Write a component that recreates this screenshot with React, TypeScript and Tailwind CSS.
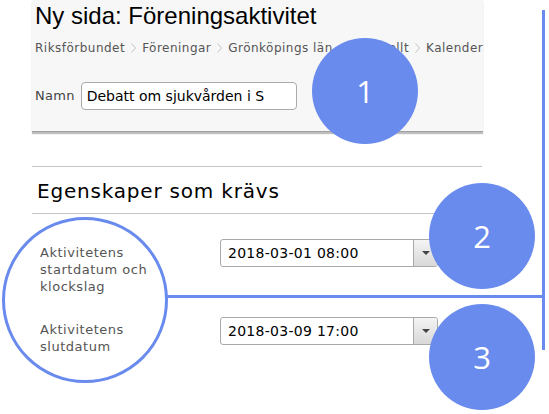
import React from "react";

const verd = { fontFamily: '"DejaVu Sans", Verdana, sans-serif' };

function Crumb({ children, last }: { children: React.ReactNode; last?: boolean }) {
  return (
    <span className="flex items-center">
      <span>{children}</span>
      {!last && (
        <svg className="mx-[6px]" width="5" height="10" viewBox="0 0 5 10">
          <path d="M0.5 0.5 L4.5 5 L0.5 9.5" fill="none" stroke="#c4c4c4" strokeWidth="1" />
        </svg>
      )}
    </span>
  );
}

function DateSelect({ value }: { value: string }) {
  return (
    <div className="flex h-[28px] w-[218px] items-stretch rounded-[3px] border border-[#a9a9a9] bg-white">
      <div className="flex flex-1 items-center pl-[7px] text-[14px] tracking-[0.02em] text-black" style={verd}>
        {value}
      </div>
      <div className="flex w-[24px] items-center justify-center rounded-r-[3px] border-l border-[#a9a9a9] bg-gradient-to-b from-[#f4f4f4] to-[#d8d8d8]">
        <div className="h-0 w-0 border-x-[4px] border-t-[4px] border-x-transparent border-t-[#444]" />
      </div>
    </div>
  );
}

function Badge({ n, className }: { n: string; className: string }) {
  return (
    <div
      className={`absolute flex h-[106px] w-[106px] items-center justify-center rounded-full bg-[#6a8bee] text-[31px] text-white ${className}`}
      style={{ fontFamily: '"Open Sans", sans-serif' }}
    >
      {n}
    </div>
  );
}

export default function App() {
  return (
    <div className="relative h-[414px] w-[549px] overflow-hidden bg-white">
      {/* top panel */}
      <div className="ml-[32px] h-[132px] w-[451px] border-b border-[#a0a0a0] bg-[#f7f7f7] pl-[3px] shadow-[0_2px_1px_0px_rgba(0,0,0,0.25)]">
        <div className="pt-[1px] text-[24px] leading-[30px] text-black" style={{ fontFamily: '"Liberation Sans", Arial, sans-serif' }}>
          Ny sida: Föreningsaktivitet
        </div>
        <div className="mt-[8px] flex items-center whitespace-nowrap text-[12px] tracking-[0.04em] text-[#555]" style={verd}>
          <Crumb>Riksförbundet</Crumb>
          <Crumb>Föreningar</Crumb>
          <Crumb>Grönköpings län - Nationellt</Crumb>
          <Crumb last>Kalender</Crumb>
        </div>
        <div className="mt-[25px] flex items-center" style={verd}>
          <span className="text-[13px] tracking-[0.02em] text-[#444]">Namn</span>
          <div className="ml-[6px] flex h-[28px] w-[216px] items-center rounded-[4px] border border-[#aaa] bg-white pl-[5px] text-[14px] text-black">
            Debatt om sjukvården i S
          </div>
        </div>
      </div>

      {/* lower section */}
      <div className="ml-[32px] mt-[34px] w-[450px]">
        <div className="border-t border-[#c4c4c4]" />
        <div className="h-[46px] pl-[5px] pt-[11px] text-[20px] leading-[26px] tracking-[0.04em] text-black" style={verd}>
          Egenskaper som krävs
        </div>
        <div className="border-t border-[#c4c4c4]" />
        <div className="mt-[25px] flex pl-[8px]" style={verd}>
          <div className="w-[180px] pt-[5px] text-[13px] leading-[17px] tracking-[0.04em] text-[#555]">
            Aktivitetens<br />startdatum och<br />klockslag
          </div>
          <DateSelect value="2018-03-01 08:00" />
        </div>
        <div className="mt-[22px] flex pl-[8px]" style={verd}>
          <div className="w-[180px] pt-[4px] text-[13px] leading-[17px] tracking-[0.04em] text-[#555]">
            Aktivitetens<br />slutdatum
          </div>
          <DateSelect value="2018-03-09 17:00" />
        </div>
      </div>

      {/* annotations */}
      <div className="absolute left-[542px] top-[10px] h-[340px] w-[3px] bg-[#6a8bee]" />
      <div className="absolute left-[167px] top-[295px] h-[3px] w-[378px] bg-[#6a8bee]" />
      <div className="absolute left-[2px] top-[217px] h-[166px] w-[166px] rounded-full border-[3px] border-[#6a8bee]" />
      <Badge n="1" className="left-[312px] top-[38px]" />
      <Badge n="2" className="left-[429px] top-[183px]" />
      <Badge n="3" className="left-[429px] top-[304px]" />
    </div>
  );
}
